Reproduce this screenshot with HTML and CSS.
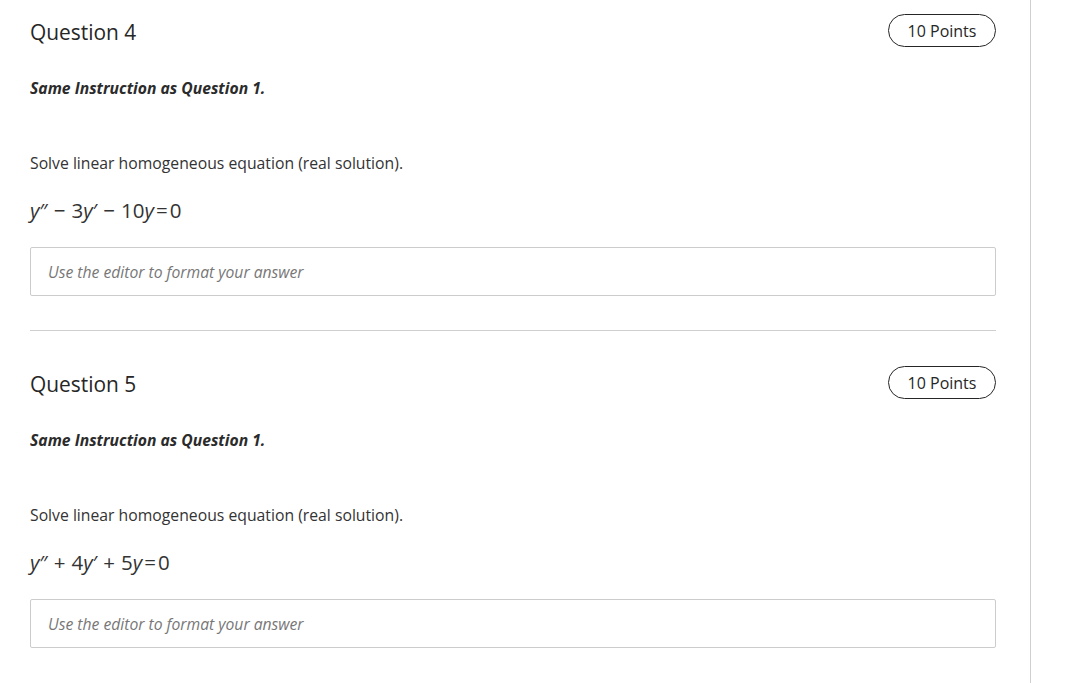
FILE: index.html
```html
<!DOCTYPE html>
<html>
<head>
<meta charset="utf-8">
<link rel="stylesheet" href="styles.css">
</head>
<body>
<div class="page">
  <div class="content">
    <section class="question first">
      <div class="q-head">
        <h2 class="q-title">Question 4</h2>
        <span class="points">10 Points</span>
      </div>
      <p class="instruction">Same Instruction as Question 1.</p>
      <p class="prompt">Solve linear homogeneous equation (real solution).</p>
      <p class="equation"><i>y</i><span class="pr">″</span><span class="op">−</span>3<i>y</i><span class="pr">′</span><span class="op">−</span>10<i>y</i><span class="eq">=</span>0</p>
      <div class="answer">Use the editor to format your answer</div>
    </section>
    <hr class="sep">
    <section class="question">
      <div class="q-head">
        <h2 class="q-title">Question 5</h2>
        <span class="points">10 Points</span>
      </div>
      <p class="instruction">Same Instruction as Question 1.</p>
      <p class="prompt">Solve linear homogeneous equation (real solution).</p>
      <p class="equation"><i>y</i><span class="pr">″</span><span class="op">+</span>4<i>y</i><span class="pr">′</span><span class="op">+</span>5<i>y</i><span class="eq">=</span>0</p>
      <div class="answer">Use the editor to format your answer</div>
    </section>
  </div>
</div>
</body>
</html>
```
FILE: styles.css
```css
html, body {
  margin: 0;
  padding: 0;
  background: #fff;
}
body {
  font-family: "Open Sans", "Noto Sans", sans-serif;
  color: #2b2b2b;
  height: 683px;
  overflow: hidden;
}
.page {
  width: 1031px;
  height: 683px;
  border-right: 1px solid #cfcfcf;
  box-sizing: border-box;
}
.content {
  width: 966px;
  margin-left: 30px;
}
.question.first {
  padding-top: 14px;
}
.q-head {
  display: flex;
  justify-content: space-between;
  align-items: center;
  height: 33px;
}
.q-title {
  margin: 0;
  font-size: 20.9px;
  font-weight: 400;
  line-height: 1;
  padding-top: 3px;
  color: #262626;
}
.points {
  box-sizing: border-box;
  height: 33px;
  width: 108px;
  border: 1px solid #262626;
  border-radius: 17px;
  display: flex;
  align-items: center;
  justify-content: center;
  font-size: 16px;
  color: #262626;
}
.instruction {
  margin: 30px 0 0;
  font-size: 15.7px;
  line-height: 22px;
  font-weight: 700;
  font-style: italic;
}
.prompt {
  margin: 53px 0 0;
  font-size: 15.75px;
  line-height: 22px;
  color: #333;
}
.equation {
  margin: 23px 0 0;
  font-size: 20.5px;
  line-height: 26px;
  color: #333;
}
.equation i {
  font-style: italic;
}
.equation .op {
  margin: 0 6px;
}
.equation .eq {
  margin: 0 2px;
}
.answer {
  box-sizing: border-box;
  margin-top: 24px;
  height: 49px;
  border: 1px solid #cccccc;
  border-radius: 2px;
  padding: 0 17px;
  display: flex;
  align-items: center;
  font-size: 15.7px;
  font-style: italic;
  color: #777;
}
.sep {
  margin: 34px 0 35px;
  border: 0;
  border-top: 1px solid #cfcfcf;
  height: 0;
}
```
